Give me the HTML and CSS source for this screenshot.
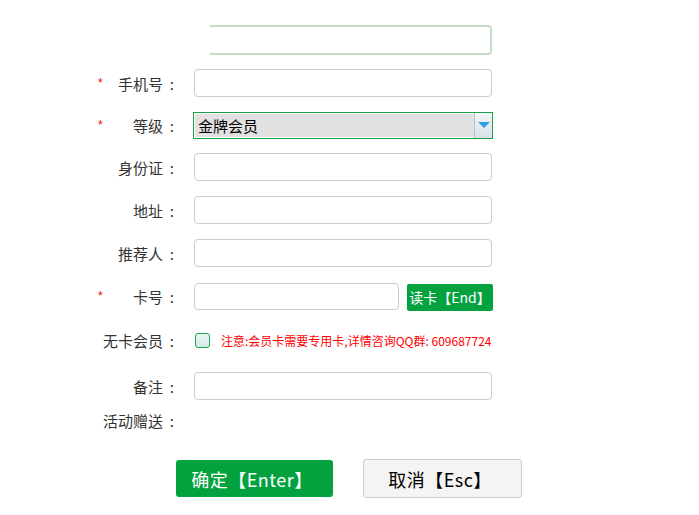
FILE: index.html
```html
<!DOCTYPE html>
<html lang="zh-CN">
<head>
    <meta charset="UTF-8">
    <meta name="viewport" content="width=device-width, initial-scale=1.0">
    <title>新增会员</title>
    <link rel="stylesheet" href="styles.css">
</head>
<body>
<div class="form">
    <div class="row top-row">
        <div class="label"></div>
        <div class="field"><div class="input cut"></div></div>
    </div>

    <div class="row tight">
        <div class="label"><span class="star">*</span><span class="text">手机号<span class="colon">:</span></span></div>
        <div class="input"></div>
    </div>

    <div class="row tight">
        <div class="label"><span class="star">*</span><span class="text">等级<span class="colon">:</span></span></div>
        <div class="select">
            <span class="select-value">金牌会员</span>
            <span class="select-arrow"><span class="triangle"></span></span>
        </div>
    </div>

    <div class="row">
        <div class="label"><span class="text">身份证<span class="colon">:</span></span></div>
        <div class="input"></div>
    </div>

    <div class="row">
        <div class="label"><span class="text">地址<span class="colon">:</span></span></div>
        <div class="input"></div>
    </div>

    <div class="row">
        <div class="label"><span class="text">推荐人<span class="colon">:</span></span></div>
        <div class="input"></div>
    </div>

    <div class="row card-row">
        <div class="label"><span class="star">*</span><span class="text">卡号<span class="colon">:</span></span></div>
        <div class="input card-input"></div>
        <button class="read-btn">读卡【End】</button>
    </div>

    <div class="row nocard-row">
        <div class="label"><span class="text">无卡会员<span class="colon">:</span></span></div>
        <span class="checkbox"></span>
        <span class="notice">注意:会员卡需要专用卡,详情咨询QQ群: 609687724</span>
    </div>

    <div class="row note-row">
        <div class="label"><span class="text">备注<span class="colon">:</span></span></div>
        <div class="input"></div>
    </div>

    <div class="row gift-row">
        <div class="label"><span class="text">活动赠送<span class="colon">:</span></span></div>
    </div>

    <div class="actions">
        <button class="btn btn-ok">确定【Enter】</button>
        <button class="btn btn-cancel">取消【Esc】</button>
    </div>
</div>
</body>
</html>
```

FILE: styles.css
```css
body {
    margin: 0;
    background-color: #fff;
    font-family: "Noto Sans CJK SC", "Liberation Sans", sans-serif;
    font-size: 14px;
    color: #333;
}
.form {
    padding: 25px 0 0 98px;
}
.row {
    display: flex;
    align-items: center;
    height: 28px;
    margin-bottom: 15px;
}
.row.tight {
    margin-bottom: 14px;
}
.top-row {
    height: 30px;
    margin-bottom: 14px;
}
.card-row {
    margin-bottom: 16px;
}
.nocard-row {
    margin-bottom: 18px;
}
.note-row {
    margin-bottom: 10px;
}
.gift-row {
    height: 20px;
    margin-bottom: 0;
}
.label {
    display: flex;
    width: 76px;
    margin-right: 20px;
    flex-shrink: 0;
}
.star {
    color: #e00;
    font-family: "Liberation Sans", sans-serif;
    font-size: 12px;
    line-height: 20px;
}
.text {
    margin-left: auto;
    font-size: 15px;
    white-space: nowrap;
}
.colon {
    display: inline-block;
    width: 11px;
    text-align: right;
}
.field {
    width: 298px;
    height: 30px;
}
.input {
    box-sizing: border-box;
    width: 298px;
    height: 28px;
    border: 1px solid #ccc;
    border-radius: 4px;
    background: #fff;
}
.input.cut {
    width: 282px;
    height: 30px;
    margin-left: 16px;
    border: 2px solid #c3dcc7;
    border-left: none;
    border-radius: 0 4px 4px 0;
}
.select {
    box-sizing: border-box;
    display: flex;
    width: 300px;
    height: 27px;
    margin-left: -1px;
    border: 1px solid #17a146;
    background: #e1e1e1;
}
.select-value {
    flex-grow: 1;
    padding-left: 3px;
    font-size: 15px;
    line-height: 24px;
    color: #000;
    border: 1px solid #fff;
    border-right: none;
}
.select-arrow {
    display: flex;
    align-items: center;
    justify-content: center;
    width: 17px;
    border-left: 1px solid #b8c4cc;
    background: linear-gradient(#f2f5f8, #d9e1e8);
}
.triangle {
    width: 0;
    height: 0;
    border-left: 6px solid transparent;
    border-right: 6px solid transparent;
    border-top: 6px solid #2c9fe2;
}
.card-input {
    width: 205px;
    height: 27px;
}
.read-btn {
    box-sizing: border-box;
    width: 86px;
    height: 27px;
    margin-left: 8px;
    margin-top: 2px;
    padding: 0;
    border: none;
    border-radius: 2px;
    background-color: #04a23f;
    color: #fff;
    font-family: "Noto Sans CJK SC", sans-serif;
    font-size: 14px;
}
.checkbox {
    box-sizing: border-box;
    width: 15px;
    height: 15px;
    margin: 0 11px 0 1px;
    border: 1px solid #1fa553;
    border-radius: 3px;
    background: linear-gradient(#eaf5f1, #d4ebe4);
}
.notice {
    color: #f00;
    font-size: 12px;
    white-space: nowrap;
}
.actions {
    display: flex;
    gap: 30px;
    margin: 29px 0 0 78px;
}
.btn {
    box-sizing: border-box;
    padding: 0 5px 0 0;
    border-radius: 3px;
    font-family: "Noto Sans CJK SC", sans-serif;
    font-size: 18px;
    letter-spacing: 0.5px;
    cursor: pointer;
}
.btn-ok {
    width: 157px;
    height: 37px;
    margin-top: 1px;
    border: none;
    background-color: #04a23f;
    color: #fff;
}
.btn-cancel {
    width: 159px;
    height: 39px;
    border: 1px solid #ccc;
    background-color: #f4f4f4;
    color: #000;
}
```
